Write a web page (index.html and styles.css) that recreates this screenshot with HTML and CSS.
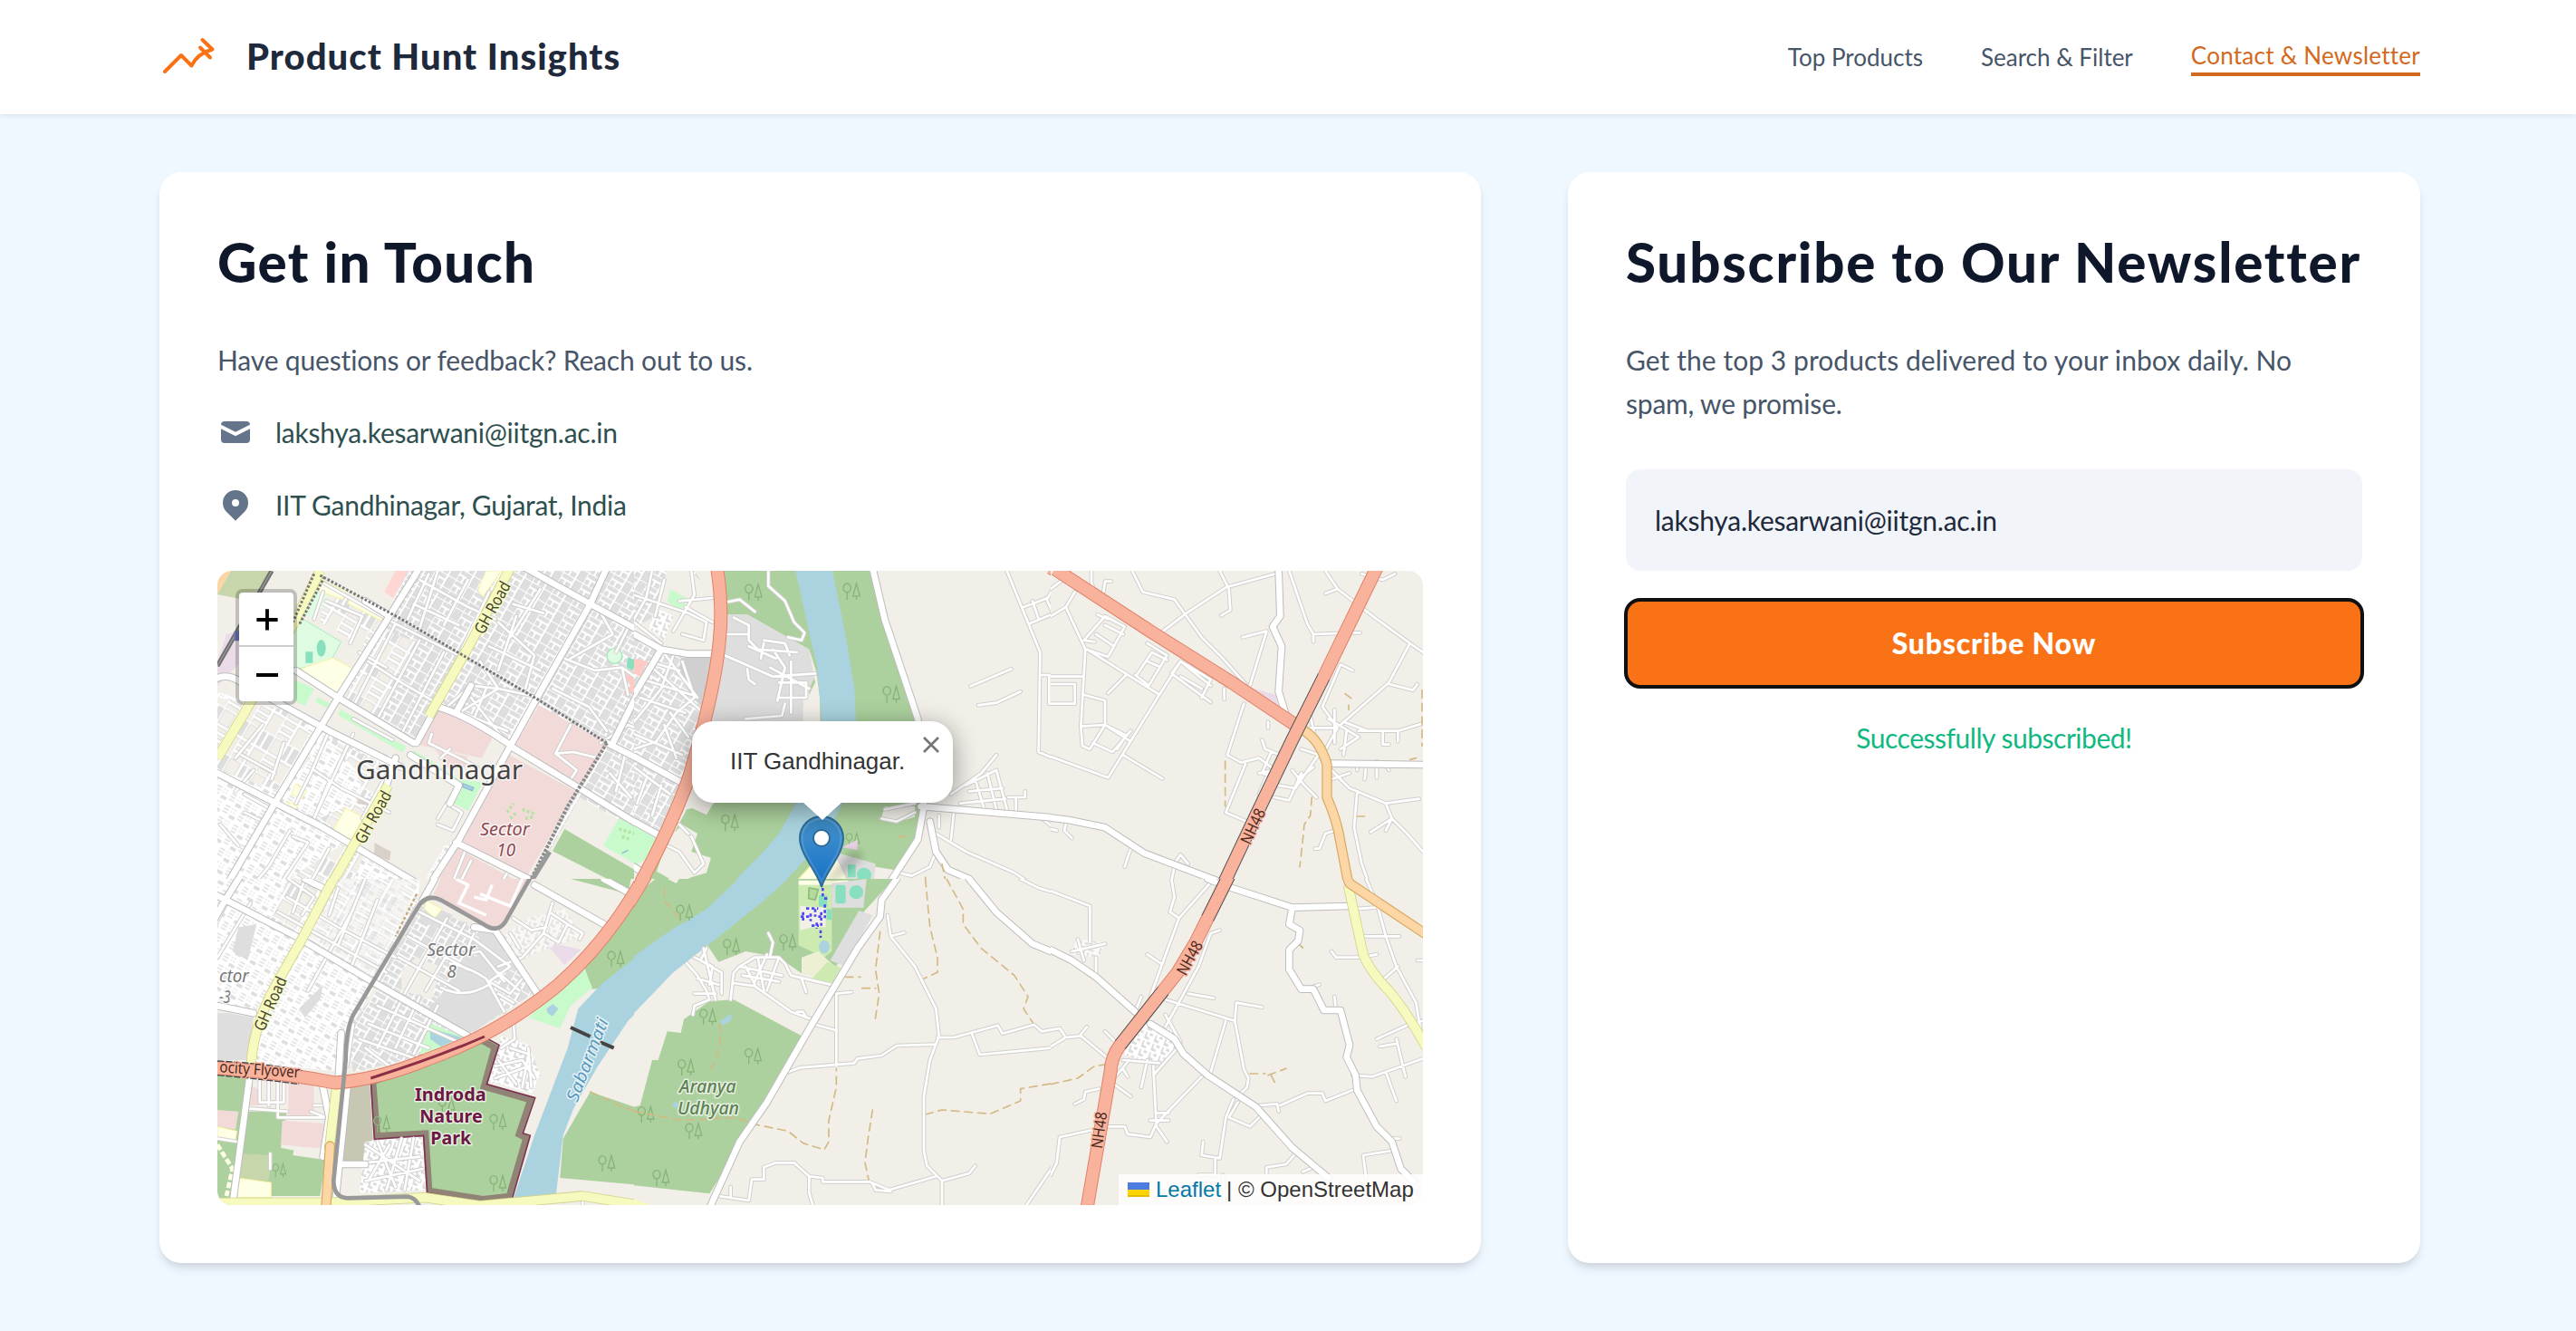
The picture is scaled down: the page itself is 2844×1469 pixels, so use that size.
FILE: index.html
```html
<!DOCTYPE html>
<html lang="en">
<head>
<meta charset="utf-8">
<title>Product Hunt Insights</title>
<link rel="stylesheet" href="styles.css">
</head>
<body>
<header class="header">
  <div class="brand">
    <svg class="logo" viewBox="0 0 64 64"><path d="M6 48 24 30 35.500 41.500Q42 28 58.500 23.500L47.500 13M45 21.500 56 32.500"/></svg>
    <span class="brand-name">Product Hunt Insights</span>
  </div>
  <nav class="nav">
    <a class="nav-products">Top Products</a>
    <a class="nav-search">Search &amp; Filter</a>
    <a class="active">Contact &amp; Newsletter</a>
  </nav>
</header>
<main class="main">
  <section class="card">
    <h1 class="title-touch">Get in Touch</h1>
    <p class="intro">Have questions or feedback? Reach out to us.</p>
    <div class="contact">
      <svg class="icon" viewBox="0 0 20 20"><path d="M2.003 5.884 10 9.882l7.997-3.998A2 2 0 0 0 16 4H4a2 2 0 0 0-1.997 1.884z"/><path d="m18 8.118-8 4-8-4V14a2 2 0 0 0 2 2h12a2 2 0 0 0 2-2V8.118z"/></svg>
      <span class="mail">lakshya.kesarwani@iitgn.ac.in</span>
    </div>
    <div class="contact">
      <svg class="icon" viewBox="0 0 20 20"><path fill-rule="evenodd" d="M5.050 4.050a7 7 0 1 1 9.900 9.900L10 18.900l-4.950-4.950a7 7 0 0 1 0-9.900zM10 11a2 2 0 1 0 0-4 2 2 0 0 0 0 4z"/></svg>
      <span class="place">IIT Gandhinagar, Gujarat, India</span>
    </div>
    <div class="map">
      <svg class="tiles" viewBox="240 630 1331 700">
        <defs>
          <pattern id="blocks" width="74" height="40" patternUnits="userSpaceOnUse" patternTransform="rotate(30)"><rect width="74" height="40" fill="#dedede"/><path d="M0 0H74M0 20H44M0 0V40M44 0V40M20 20V40" stroke="#c4c4c4" stroke-width="11" fill="none"/><path d="M0 0H74M0 20H44M0 0V40M44 0V40M20 20V40" stroke="#fff" stroke-width="8" fill="none"/></pattern>
          <pattern id="plots" width="96" height="130" patternUnits="userSpaceOnUse" patternTransform="rotate(30)"><rect width="96" height="130" fill="#f2efe9"/><path d="M50 0H96V60H50z" fill="#dedede"/><path d="M0 0H96M0 60H96M0 0V130M50 0V130M72 0V60M0 85H50M0 108H50" stroke="#cfcfcf" stroke-width="13" fill="none"/><path d="M0 0H96M0 60H96M0 0V130M50 0V130M72 0V60M0 85H50M0 108H50" stroke="#fff" stroke-width="9" fill="none"/></pattern>
          <pattern id="dense" width="56" height="44" patternUnits="userSpaceOnUse" patternTransform="rotate(30)"><rect width="56" height="44" fill="#fff"/><path d="M4 8H22M4 19H22M4 30H22M30 8H34M40 8H44M30 19H34M40 19H44M34 31H50V38H34z" stroke="#dcdcdc" stroke-width="4" fill="#e6e2dc"/></pattern>
          <pattern id="village" width="34" height="30" patternUnits="userSpaceOnUse" patternTransform="rotate(20)"><rect width="34" height="30" fill="#dadada"/><path d="M0 2H34M0 16L16 20V30M4 0V16M24 0V30" stroke="#fff" stroke-width="9" fill="none"/></pattern>
          <symbol id="trees" viewBox="0 0 60 60"><path d="M15 57V33M15 33A12 14 0 1 1 15.100 33M45 57V45M34 45 45 4 56 45z" fill="none" stroke="#88b47a" stroke-width="4"/></symbol>

          <path id="a1-minor" d="M380 70 620 205 830 310M500 300 590 350M530 330 640 400 760 470M380 100 350 190M390 130 510 180 470 270M620 205 480 480M700 260 560 520M780 300 640 570M860 60 780 210M930 100 840 290M700 60 860 150 950 190M680 140 830 210M660 190 730 40M760 30 700 220M960 200 1080 310 1050 420M900 330 960 420 830 500M930 280 1100 360M1020 180 960 360M1100 90 1000 250M1110 170 1010 140M1170 310 1120 400M780 490 870 410 960 420 1100 450M840 500 990 560M870 450 980 590M920 420 880 520M1180 320 1280 360 1370 350 1440 400M1200 320 1340 240 1300 170M1370 350 1390 440M1320 560 1260 480 1140 420M1350 300 1400 200 1440 230M1300 600 1390 540 1440 560M1330 700 1400 780M1380 640 1350 760M120 770 210 820M150 690 90 760M110 640 220 700M180 540 90 650M250 600 210 720M330 520 410 560M400 560 340 700 290 800M480 570 350 850M350 690 440 750 600 830M350 850 400 730M620 650 510 850M740 570 730 600 890 680M800 620 770 650M1200 540 1150 635 1220 690 1200 720M1150 635 1210 630 1290 650M850 960 810 1060M870 990 830 1070M960 1080 990 1030M760 850 790 800 840 830 810 890 760 870M40 870 100 940M120 830 180 860 150 930M270 890 200 1010 140 1080M280 910 330 930 250 1050M400 950 340 1060M500 490 660 580M480 520 610 590"/>
          <path id="a1-main" d="M30 385Q70 370 110 400L400 560 640 680M290 360 430 450 680 600M700 20 600 180 430 450 220 800 50 1090M1050 20 1265 140 1440 235M1320 20 1265 140 1100 430 1000 610 830 920 720 1090M1000 610 1230 750 1440 880M30 700 380 880 700 1070M820 930 1060 1050M1440 400 1340 600M1320 600 1440 660M690 600 750 490M760 480Q860 510 990 600M620 650 590 740M670 640 830 740 800 800M600 180 520 130M820 500 870 410"/>
          <path id="b1-minor" d="M445 30V80L500 130 530 200 565 235 555 260 510 250M300 135 350 125 400 165M330 185 380 210V260L410 290 540 300M300 240 380 240M300 310 460 380 600 370M375 355 380 390 400 405M430 260 500 270 515 310M460 290 500 350 475 460M450 350 580 420M480 400H570V450H480M520 330V500M370 520 490 510 500 470M430 270 420 320M380 280 470 320M1235 30 1345 300 1340 630 1440 672M1345 375H1440M1375 380V470H1440M1440 405H1385M1290 150 1370 120 1400 70 1440 30M1310 205 1440 150M1320 130 1340 190M1365 120 1385 165M1115 412 1250 355M1140 475 1200 467 1280 430M1050 770 1150 700 1200 640M1100 740 1200 690 1235 820M1130 720 1160 820M1170 700 1200 820M1110 760 1220 750M1080 800 1230 785M1240 780H1295V760M1265 780V830M1010 840V880M1060 820 1050 920M830 820 930 800M820 850 870 860 930 830M1340 840 1400 890M1000 900 1100 960 1260 1030 1320 1070 1440 1110M1000 960 980 1010 920 1040 880 1030M110 940 150 960 200 1030 230 1000 190 910M180 900 150 870M0 200 90 270M60 30 40 120 0 190M100 60 70 180M190 30 200 110 130 230M0 110 180 170 240 200 230 260 160 240M150 130 260 120M170 150 260 200M90 290 210 450M130 310 90 420 0 530M160 330 200 450 140 500 70 600 0 570M30 390 190 440M60 350 230 500M20 450 170 500M120 500 180 580M70 600 160 640M100 540 140 650M0 680 120 770M40 720 10 800M90 740 60 840M50 330 150 360M0 620 60 600"/>
          <path id="b1-main" d="M790 20 830 190 940 520 960 810 940 920 810 1120M950 810 1440 852M980 860 1000 960 1040 1020 1110 1050 1180 1130M0 240 90 290 180 305 265 305M90 290 0 440M0 645 165 735M0 860 100 915M0 1010 30 1030"/>
          <path id="c1-minor" d="M135 20V70L150 105M270 30 305 100 410 125 500 250 570 320 650 410M365 235 450 170 580 85 745 40M560 30 590 90 595 160 565 178M175 100 180 65H200M80 100 50 150 115 290 100 545 105 610 130 620 180 540 265 595M0 180 50 150M0 90 40 60M120 290 360 440 430 330 530 410M145 265 110 260 180 180 245 215 190 315 120 290M180 210 240 240M150 240 210 280M155 175 190 190M285 375 335 300 385 325M320 270 385 310 325 410 280 375M320 330 355 345M400 370 530 465M400 370 430 330 530 390 500 450M430 380 500 420M575 420V455M250 375 190 435M0 380H110M0 405H80V470H0M110 440 180 460V540L100 545M140 600 205 630 265 560M180 540 250 575 220 620M360 440 190 715 0 645M240 640 370 718M715 230 660 410M715 230 635 250M790 30 850 205 870 240 1000 235H1025M870 240V265M640 470 585 640 630 665 690 650 730 680M645 670 580 830 660 865M720 530V550M700 590 710 620 760 640M730 630 700 700 750 720M690 700 740 690M690 770 720 700M740 780 790 790 830 700M750 740 810 750 900 620M800 690 840 740 880 780M830 620 890 640M820 720 870 680M910 30 950 90 1080 190 1190 270 1120 400 960 540M910 105 950 90M1190 270 1233 300M1120 405 1200 425 1215 405M960 340 900 480 950 550 900 640M960 340 1000 360M920 520 1020 580 960 620M940 490V600M980 560 970 640M860 550H950M1020 560 1150 560 1233 535M1100 560V605H1120M1150 565V595M1015 670V690M1045 670 1040 720M1080 660V715M1110 670 1120 690M930 690 990 750 1110 800 1130 850 1180 900 1233 960M1110 800 1220 785M1060 895 1130 850 1110 890M1015 760 1005 880 1030 1000 1070 1110M940 890 910 900 890 950H875M1030 40 1100 60 1140 40M0 885 20 890M265 950 245 1010M50 870 45 890 70 915M410 1000 430 970 455 1000M410 1010 395 1080 415 1110M540 1060 500 1110M880 600 860 510M970 530 1050 560M930 720 990 700M0 1090 30 1110"/>
          <path id="c1-main" d="M755 30 760 180 735 215 765 280 755 430 780 510 840 560M930 668 1240 672M0 848 60 855 180 880 310 965 600 1075 720 1115"/>
          <path id="a2-minor" d="M690 90 560 340M790 130 650 380M850 150 720 370M700 110 880 200 1000 290M660 190 860 300M630 260 830 370M880 180 850 250 900 240 980 340M800 280Q860 290 920 330L980 440M770 360Q850 400 930 350M1000 290 930 340 1000 380 1040 330M960 310 1030 370M960 380 1010 410M1140 80 1110 180 1040 260 960 290M1010 130 1070 170 1120 160M1130 110 1190 150 1160 210 1110 180M1190 150 1240 180 1230 200M1000 180 1030 230M640 400 560 560M700 390 620 560M760 420 680 580M560 420 850 550M530 480 730 560M500 530 700 600M480 480 460 620M520 560 600 620M170 670V740H250V670M200 660V750M230 670V790H390M340 770 390 790M350 750H400M130 760 260 770M265 0 350 60M320 0 280 110M350 60 310 120M430 30 400 120M520 0 430 220M60 80 20 160M140 80 30 260M480 100 330 370M560 70 470 300M260 60 430 160 620 260M230 110 590 310M950 620 1040 600 1080 660M1000 560 1060 580 1040 690M950 660 1060 620M960 600 1020 680M1010 470 1015 530 970 560M1060 560 1070 690M600 880 530 1000M640 860 590 1030M520 880 700 1000M520 940 700 920M560 870 620 1020M520 1000 710 960M680 860 650 1030M30 860 95 870M205 910V960M1240 1060V1080"/>
          <path id="a2-main" d="M0 40 290 190 560 350 860 520M100 0 50 80 0 170M750 0 710 70M1080 20 1310 150M950 170 1090 380M880 160 950 170M30 420 150 445M140 630 80 1080M1310 0 1400 50M440 510 430 680M460 690 420 1080M320 0 400 40M380 690 400 790 380 920M430 945H520"/>
          <path id="b2-minor" d="M175 280 210 320 240 370 250 400M240 230 220 270 290 310M200 260 260 290 250 350M330 310 350 290 400 260H480L500 280 520 320M445 180 460 210 450 260M330 310 320 400M330 345 400 355 520 440 590 465M520 320 650 350M555 330 570 375M670 380V620M670 380 720 375M590 480 665 500M540 440 560 440 570 460M510 640 550 625 730 610 740 595 820 585 870 552 1000 548M840 120 850 190 930 290 1000 430 1010 520 980 600 960 720V900L970 950 1020 1000V1090M850 190 895 178M1005 525 1060 525 1205 485 1220 512 1325 483 1350 505 1410 495 1430 525 1380 560 1145 582 1120 515M1440 520 1430 525M1280 0 1340 30 1440 60M280 1050 380 1065 390 995H430V955L470 940H530L580 985 625 990V1003H780L845 1030 1000 985M580 985V1040L595 1090M320 1020V1050M790 1010 800 1030 850 1035M1020 1000 1110 975 1130 950M1440 855H1410L1395 940 1300 1080M195 450 200 420 250 400M370 290 400 350M410 260 430 370M440 250 400 340M480 260 440 370M350 290 490 320M360 320 480 340M230 230 270 400M290 310V380M200 380H270M210 330 280 350"/>
          <path id="b2-main" d="M870 0 820 70 815 125 740 230 590 480 440 740 350 870 250 1090M1110 0 1200 110 1320 215 1440 265"/>
          <path id="c2-minor" d="M400 0 410 60 395 110 425 130 540 0M425 130 370 280 330 390M320 250 365 280M560 170 530 180 490 290 380 490M455 380 540 395M380 400 610 470 615 410 700 425M580 470 530 640M610 470 640 630 655 660 650 690 620 720M0 555 50 525 100 520 185 590M0 500 30 495 50 525M120 490 95 520M180 505 215 540M160 695 115 705 110 730 80 745M210 680 265 720M30 855 190 820 245 820 255 845 330 855 350 810 500 655M30 855 20 940 0 980M340 620 350 820 385 870M330 800H390M350 775H390M300 690 320 600M210 660 260 600M240 630 255 655M690 750 750 745 755 770M760 750 850 710H900L910 735 1000 700M605 730 580 790 560 925 500 915 505 870M620 740 590 790 660 820 690 790M545 925V980H490M570 980 575 1070M810 910 780 945 715 955V975M870 955 835 970M945 435 940 390M890 350 860 360M1000 650 1065 655 1233 595M1110 640 1145 735M1145 530 1175 655M1090 555 1150 545M1080 530 1180 485 1233 470M1045 0 1080 80 1110 190 1145 290 1210 410 1225 500M1040 190H1155M930 240 945 260H1030L1080 250M1105 330 1150 290M1130 900 1035 915 1045 990M1155 860H1125M1000 100 1075 95M130 210 130 90 0 40M1215 270H1233M150 260 150 320M70 240 180 215M90 200 110 270M240 600 360 610M300 390 280 440M340 650 420 560M380 450 430 540"/>
          <path id="c2-main" d="M0 235 70 270 150 325 280 440M600 30 800 95 990 90M800 95 790 150 825 170 820 205 790 235 790 300 830 365 870 365 905 435H960L990 550 980 590 1010 650 1015 700 1080 820 1130 870 1160 960 1200 1000M330 480 410 530 440 580 520 650 680 755 800 890 920 990M520 0 545 10"/>
        </defs>

        <svg x="230" y="620" width="472" height="352" viewBox="0 0 1416 1056">
          <rect width="1440" height="1080" fill="#f2efe9"/>
          <path d="M30 430 400 560 620 650 480 940 830 940 720 1080H0z" fill="url(#dense)"/>
          <path d="M30 450 320 500 340 650 240 760 30 690z" fill="url(#plots)"/>
          <path d="M640 30H1440V1080H1050L1220 750 1000 610 820 500 700 590 430 440 600 180z" fill="url(#blocks)"/>
          <path d="M540 210 700 270 560 520 440 450z" fill="url(#plots)"/>
          <path d="M950 200 1180 320 1100 460 990 580 830 510 860 290z" fill="url(#blocks)"/>
          <path d="M390 60 590 180 480 260 370 200z" fill="url(#plots)"/>
          <path d="M1230 780 1440 900V1080H1060z" fill="#f2efe9"/>
          <path d="M370 570 600 680 560 760 370 850 480 930 420 950 220 1080H470L520 960 500 700z" fill="url(#plots)"/>
          <path d="M640 730H730L800 770 760 850 810 895 710 1065 490 935 560 830z" fill="#f2efe9"/>
          <path d="M30 30H75L30 108z" fill="#fcd6a4"/><path d="M75 30H205L140 130 90 120 30 108z" fill="#c8d7ab"/>
          <path d="M60 240 100 230V340L30 410V330z" fill="#ebdbe8"/>
          <path d="M360 95 395 115 350 190 310 170z" fill="#dffce2"/><path d="M280 170 440 265 400 340 280 356z" fill="#dffce2" stroke="#a9eebc" stroke-width="3"/>
          <ellipse cx="374" cy="286" rx="15" ry="28" fill="#88e0be"/><path d="M322 298H346V335H322z" fill="#88e0be"/>
          <path d="M375 60 455 98 445 125 360 95zM470 118 582 180 572 195 462 138zM305 355 412 318 480 355 428 447zM920 30H970L910 115 893 95zM455 815 520 850 475 930 412 890zM290 735 325 760 310 785 275 770zM260 795 300 805 285 822z" fill="#ffffe5" stroke="#f6f2a0" stroke-width="3"/>
          <path d="M620 30H662L612 120 583 100z" fill="#ffd6d1"/>
          <path d="M360 447 413 475 408 492 355 465zM437 488 655 612 645 632 430 508zM285 390 350 420 320 477 285 460zM680 625 740 660 830 720 910 730 860 825 808 797 828 742 676 645zM925 745 1008 785 968 857 900 820zM1360 850 1440 885V1005H1420L1308 940z" fill="#c8facc"/>
          <circle cx="1345" cy="312" r="25" fill="#dffce2" stroke="#9fe7b5" stroke-width="4"/><path d="M1390 315 1420 330 1405 360 1385 350z" fill="#88e0be"/><path d="M1380 380 1440 350V380L1390 450 1375 430 1400 410z" fill="#ffc9c4"/>
          <path d="M755 490 860 530 945 575 905 650 690 605zM1095 475 1322 602 1235 738 1015 610zM990 635 1217 760 1050 1050 833 920zM825 948 1020 1055V1080H745zM750 620 860 645 850 680 800 690z" fill="#f2dad9"/>
          <path d="M1180 885 1430 1030 1400 1080H1380L1140 958z" fill="#add19e"/>
          <path d="M550 930 605 960 600 990 550 970zM500 780 550 790 540 810 495 800z" fill="#d9d0c9"/>
          <path d="M845 735 878 748 874 758 842 745zM1370 965 1390 955" fill="#aad3df" stroke="#8bb8d8" stroke-width="4"/>
          <path d="M990 830 1010 800M1000 850 1020 830M1040 820 1080 835M1050 850 1075 845M1360 885 1430 905M1370 910 1400 920" stroke="#b5e3a0" stroke-width="10" stroke-dasharray="9 7"/>
          <use href="#a1-minor" class="minor-case"/><use href="#a1-minor" class="minor"/>
          <path d="M210 30 30 345" stroke="#707070" stroke-width="15"/><path d="M210 30 30 345" stroke="#aaa" stroke-width="3"/><path d="M85 230H105V262H85z" fill="#6f74b0"/>
          <use href="#a1-main" class="main-case"/><use href="#a1-main" class="main-road"/>
          <path d="M370 30 280 210 120 500 30 650M1000 20 860 285 730 512M595 740 395 1090" class="yellow-case"/><path d="M370 30 280 210 120 500 30 650M1000 20 860 285 730 512M595 740 395 1090" class="yellow"/>
          <path d="M350 40 280 200M385 50 300 210M370 45 640 190 1090 455 1320 600" fill="none" stroke="#777" stroke-width="9" stroke-dasharray="8 6"/><path d="M1320 600 1190 810 1050 1090" fill="none" stroke="#8a8a8a" stroke-width="12" stroke-dasharray="9 5"/><path d="M1130 960 1050 1090" stroke="#999" stroke-width="16"/>
          <path d="M1380 1120 1440 1020V1120z" fill="#f9b29c"/>
          <g class="label"><text class="city" x="489" y="720" textLength="552" lengthAdjust="spacingAndGlyphs">Gandhinagar</text><text class="sector-red" x="900" y="906" textLength="164" lengthAdjust="spacingAndGlyphs">Sector</text><text class="sector-red" x="955" y="976" textLength="62" lengthAdjust="spacingAndGlyphs">10</text><text class="road-name" transform="translate(911 244) rotate(-61)" textLength="190" lengthAdjust="spacingAndGlyphs">GH Road</text><text class="road-name" transform="translate(516 938) rotate(-61)" textLength="190" lengthAdjust="spacingAndGlyphs">GH Road</text></g>
        </svg>

        <svg x="700" y="620" width="462" height="352" viewBox="0 0 1386 1056">
          <rect width="1440" height="1080" fill="#f2efe9"/>
          <path d="M0 30H200L260 120 255 430 180 720 95 910 0 860z" fill="url(#blocks)"/>
          <path d="M60 30 190 30 260 110V300L90 290 0 240V190z" fill="#f2efe9"/><path d="M0 30H110L70 180 0 220z" fill="url(#blocks)"/><path d="M70 150 130 180 100 260 50 220z" fill="url(#village)"/>
          <path d="M120 90 182 125 150 162 110 130z" fill="#c8facc"/><path d="M0 320 45 330 20 380 0 370z" fill="#ffc9c4"/>
          <path d="M300 30H790L940 527 960 800 925 960 860 1020 800 1010 760 1110H0V1060L110 940 175 820 270 798 540 680 580 520 580 290 375 175H305z" fill="#add19e"/>
          <path d="M305 175H375L580 290 605 370 560 460 570 530H230L280 310z" fill="#dedede"/><path d="M580 290 605 370 615 450 620 680H560V480L600 400z" fill="#f2efe9"/>
          <path d="M155 318H265L240 490 190 450 150 350z" fill="#d0d0d0"/>
          <path d="M0 872 75 910 40 985 0 1005z" fill="#c8facc"/><path d="M190 780H275L240 838 180 810zM110 920 160 870 210 900 190 960 255 980 240 1030 190 1045 145 1065 75 1025zM830 810H930V845L860 865 820 845z" fill="#f2efe9"/>
          <path d="M535 30H657L700 240 730 420 740 640 690 800 630 920 440 1120H270L420 970 480 900 535 800 620 650 620 500 605 340 570 190z" fill="#aad3df"/>
          <use href="#trees" x="365" y="70" width="62" height="62"/><use href="#trees" x="690" y="67" width="62" height="62"/><use href="#trees" x="822" y="408" width="62" height="62"/><use href="#trees" x="287" y="833" width="62" height="62"/><use href="#trees" x="700" y="890" width="50" height="60"/>
          <path d="M545 1075V1050L600 990 690 980 705 1060 640 1080z" fill="#ffffe5" stroke="#f3ee9a" stroke-width="4"/><path d="M660 960 800 1000 790 1110H650L710 1065z" fill="#dedede"/><path d="M545 1080H655V1110H545z" fill="#cdebb0"/>
          <path d="M708 1003H734V1045H708zM668 1075H702V1110H668z" fill="#88e0be"/><circle cx="762" cy="1037" r="24" fill="#88e0be"/><circle cx="735" cy="1094" r="23" fill="#88e0be"/><path d="M720 930 740 920V955L690 945" fill="#e7cfe2"/>
          <use href="#b1-minor" class="minor-case"/><use href="#b1-minor" class="minor"/><use href="#b1-main" class="main-case"/><use href="#b1-main" class="main-road"/>
          <path d="M875 910H910M965 1045 970 1110M1020 1000 1030 1050 1070 1110M100 1060V1110" class="path"/>
          <path d="M275 20Q295 150 283 260 270 420 180 720 110 910-10 1120" class="trunk-case"/><path d="M275 20Q295 150 283 260 270 420 180 720 110 910-10 1120" class="trunk"/>
          <path d="M1380 20 1450 62" class="trunk-case"/><path d="M1380 20 1450 62" class="trunk"/>
        </svg>

        <svg x="1160" y="620" width="422" height="352" viewBox="0 0 1266 1056">
          <rect width="1270" height="1080" fill="#f2efe9"/><path d="M655 415 745 440 755 495 650 435z" fill="#ebdbe8"/>
          <use href="#c1-minor" class="minor-case"/><use href="#c1-minor" class="minor"/><use href="#c1-main" class="main-case"/><use href="#c1-main" class="main-road"/>
          <path d="M578 660V810M975 437 995 452M987 475V490M865 780 860 840 840 870 835 920 825 1010M1015 843H1040M1190 655 1210 650M1230 425V610" class="path"/>
          <path d="M840 560Q890 590 915 670L915 780Q950 860 960 930L985 1060 1060 1110" class="orange-case"/><path d="M840 560Q890 590 915 670L915 780Q950 860 960 930L985 1060 1060 1110" class="orange"/>
          <path d="M15 25 330 230 600 400 810 540" class="trunk-case"/><path d="M15 25 330 230 600 400 810 540" class="trunk"/>
          <path d="M1080 20 905 380" class="trunk-case"/><path d="M905 380 800 590 680 840 545 1125" class="bridge-case"/><path d="M1080 20 905 380 800 590 680 840 545 1125" class="trunk"/>
          <g class="label"><text class="trunk-name" transform="translate(660 940) rotate(-65)" textLength="124" lengthAdjust="spacingAndGlyphs">NH48</text></g>
        </svg>

        <svg x="230" y="970" width="472" height="370" viewBox="0 0 1416 1110">
          <rect width="1440" height="1110" fill="#f2efe9"/>
          <path d="M0 0H700L690 110 560 340 460 510 450 640 150 610 150 445 30 420z" fill="url(#dense)"/>
          <path d="M265 0H380L290 190 200 140z" fill="url(#plots)"/><path d="M420 0H700L560 340 310 200z" fill="url(#plots)" opacity=".6"/>
          <path d="M710 80 900 170 1090 370 980 440 860 520 560 350z" fill="url(#blocks)"/><path d="M560 370 720 450 840 530 690 590 480 640 460 500z" fill="url(#blocks)"/>
          <path d="M720 80 810 120 780 170 700 140zM900 170 950 180 1010 290 930 330 790 360 720 440 860 510 970 440 940 350 890 260z" fill="#dedede"/><path d="M850 250Q930 250 930 350L980 440 860 515 725 440 780 370Z" fill="#dedede"/>
          <path d="M690 260 770 290 740 400 640 370 640 300z" fill="#f2efe9"/><path d="M30 445H70L150 460 130 600H30zM100 160 160 150 130 270 80 240zM300 430 380 350 370 400 320 460z" fill="#dedede"/>
          <path d="M720 70 775 100 750 130 715 100z" fill="#ffffe5" stroke="#f3ee9a" stroke-width="3"/>
          <path d="M770 0H1060L980 150 940 165 745 50z" fill="#f2dad9"/><path d="M820 0 860 20 830 80 920 120M900 50 1000 90 1040 0M880 60 920 70 940 20" fill="none" stroke="#fff" stroke-width="10"/>
          <path d="M1060 50 1130 80 1090 150 1030 110z" fill="#f2efe9"/><path d="M1110 205 1235 235 1180 285z" fill="#ebdbe8"/><path d="M1060 130 1180 100 1240 190 1100 240 1000 280 960 200z" fill="url(#village)" opacity=".55"/>
          <path d="M1200 0H1400L1390 50z" fill="#add19e"/><path d="M1245 290 1440 50V350L1270 365z" fill="#add19e"/><path d="M1240 285 1272 360 1200 420 1165 495 1060 460z" fill="#c8facc"/>
          <path d="M1120 430 1140 415 1160 430 1140 455 1125 445z" fill="#aad3df"/>
          <path d="M740 480 850 525 790 560 700 580 720 520z" fill="#c8facc"/><path d="M735 495 840 525 770 555 735 530z" fill="#aad3df"/>
          <path d="M1440 240 1300 350 1225 430 1190 560 1080 850 1010 1060H1150L1175 850 1210 760 1290 620 1390 470 1440 420z" fill="#aad3df"/>
          <path d="M1265 705 1440 765V1015L1165 990 1175 860z" fill="#add19e"/>
          <path d="M30 650H140L90 1060H30zM130 770 260 770 240 890 390 920 370 1050H100z" fill="#add19e"/><path d="M30 765 100 770 90 830 30 820zM265 670H350V780L265 790zM135 680 170 700V750H135zM245 800 385 810 380 895 240 880z" fill="#f2dad9"/>
          <path d="M285 890H385V930L280 915z" fill="#f2efe9"/><path d="M110 910 210 915 200 1000 100 990z" fill="#c8d7ab"/><path d="M30 820 95 835 90 865 30 860zM100 990 208 1005V1055H95z" fill="#ffffe5" stroke="#f3ee9a" stroke-width="3"/>
          <path d="M470 690 535 680 545 860 510 940H430z" fill="#c7c7b4"/><path d="M30 880 80 960 60 1050" fill="none" stroke="#ffffe5" stroke-width="14" stroke-dasharray="20 8"/>
          <path d="M520 870 705 850 720 1030 500 1040z" fill="url(#village)"/><path d="M970 520 1060 550 1100 650 1070 710 930 670 960 560z" fill="url(#village)"/>
          <path d="M538 665 910 525 960 550 920 680 1080 725 1040 840 1065 850 1005 1060 910 1070 725 1040 713 850 550 862z" fill="#add19e"/><path d="M546 672 905 535 948 558 912 688 1066 732 1028 846 1052 858 996 1050 910 1060 732 1032 720 842 560 850z" fill="none" stroke="#8f7a72" stroke-width="20" opacity=".9"/><path d="M538 665 910 522 963 550 922 680 1082 725 1042 842 1066 850 1006 1060 910 1071 725 1040 713 850 550 862z" fill="none" stroke="#7d3351" stroke-width="5"/>
          <use href="#trees" x="1320" y="235" width="60" height="60"/><use href="#trees" x="545" y="782" width="60" height="60"/><use href="#trees" x="930" y="775" width="60" height="60"/><use href="#trees" x="930" y="978" width="60" height="60"/><use href="#trees" x="1290" y="912" width="60" height="60"/><use href="#trees" x="210" y="935" width="50" height="60"/><use href="#trees" x="760" y="720" width="60" height="60"/>
          <use href="#a2-minor" class="minor-case"/><use href="#a2-minor" class="minor"/><use href="#a2-main" class="main-case"/><use href="#a2-main" class="main-road"/>
          <path d="M420-10 310 200 230 340Q150 480 142 610" class="yellow-case"/><path d="M420-10 310 200 230 340Q150 480 142 610" class="yellow"/><path d="M425 690 400 900M30 1072H400L720 1055 900 1082 1240 1050 1440 1082" class="yellow-case"/><path d="M425 690 400 900M30 1072H400L720 1055 900 1082 1240 1050 1440 1082" class="yellow"/>
          <path d="M403 885 390 1085" class="orange-case"/><path d="M403 885 390 1085" class="orange"/>
          <path d="M20 626Q240 640 420 675 560 665 720 600 960 515 1160 350 1330 200 1450-20" class="trunk-case"/><path d="M20 626Q240 640 420 675 560 665 720 600 960 515 1160 350 1330 200 1450-20" class="trunk"/><path d="M30 603Q200 612 310 635M30 650Q200 665 300 680" fill="none" stroke="#444" stroke-width="4" stroke-dasharray="22 5"/>
          <path d="M538 660Q760 590 915 522" fill="none" stroke="#8a2f45" stroke-width="9"/>
          <path d="M1070-10 985 140Q960 180 920 155L770 70Q720 45 690 100L480 450Q455 500 455 600L415 1000Q415 1055 460 1057L660 1052Q685 1055 700 1085" fill="none" stroke="#999" stroke-width="14"/><path d="M690 50 620 190" stroke="#c9a87c" stroke-width="7" stroke-dasharray="10 7"/>
          <path d="M1200 492 1265 522M1297 540 1343 560" stroke="#444" stroke-width="12"/><path d="M1265 705 1350 745 1440 780" class="path"/>
          <g class="label"><text class="sector" x="724" y="256" textLength="160" lengthAdjust="spacingAndGlyphs">Sector</text><text class="sector" x="790" y="328">8</text><text class="sector" x="36" y="341" textLength="98" lengthAdjust="spacingAndGlyphs">ctor</text><text class="sector" x="36" y="412" textLength="38" lengthAdjust="spacingAndGlyphs">-3</text><text class="park" x="684" y="734" textLength="236" lengthAdjust="spacingAndGlyphs">Indroda</text><text class="park" x="700" y="806" textLength="208" lengthAdjust="spacingAndGlyphs">Nature</text><text class="park" x="736" y="878" textLength="135" lengthAdjust="spacingAndGlyphs">Park</text><text class="river" transform="translate(1222 742) rotate(-69)" textLength="290" lengthAdjust="spacingAndGlyphs">Sabarmati</text><text class="road-name" transform="translate(184 508) rotate(-66)" textLength="190" lengthAdjust="spacingAndGlyphs">GH Road</text><text class="trunk-name" transform="translate(36 640) rotate(4)" textLength="266" lengthAdjust="spacingAndGlyphs">ocity Flyover</text></g>
        </svg>

        <svg x="700" y="970" width="462" height="370" viewBox="0 0 1386 1110">
          <rect width="1440" height="1110" fill="#f2efe9"/>
          <path d="M70 0H860L760 110 650 330 550 310 480 260 370 240 280 275 240 215 0 260V60z" fill="#add19e"/><path d="M110 0H150L140 15z" fill="#f2efe9"/>
          <path d="M345 0H510L420 80 250 215 130 310 0 445V255L130 165 240 100z" fill="#aad3df"/>
          <path d="M165 465 200 440 250 405 330 400 555 520 440 740 250 1042 0 1015V755L20 750 60 600H80L110 505 155 510z" fill="#add19e"/><path d="M285 470 325 445 320 470 290 485z" fill="#aad3df"/><circle cx="137" cy="748" r="9" fill="#aad3df"/>
          <path d="M545 20H655V240L630 260 545 220z" fill="#cdebb0"/><path d="M545 5H710V20H545z" fill="#ffffe5"/><path d="M550 90 635 95V160H590L550 170z" fill="#f2efe9"/><path d="M655 15 770 0 760 95H655z" fill="#dedede"/><path d="M745 105 790 120 700 290 650 270z" fill="#dedede"/>
          <path d="M555 260 610 240 670 295 650 345 555 310z" fill="#eef0d5"/><path d="M640 275 685 295 660 345 590 330z" fill="#cdebb0"/><path d="M0 1060 80 1090H0z" fill="#f7fabf"/>
          <rect x="667" y="20" width="34" height="62" rx="9" fill="#88e0be"/><circle cx="736" cy="44" r="23" fill="#88e0be"/><path d="M612 55H640V92H612zM638 100H654V136H638z" fill="#88e0be"/><ellipse cx="630" cy="225" rx="18" ry="22" fill="#aad3df"/><path d="M580 30 610 35 600 70 578 65z" fill="#b6d99c" stroke="#8db97c" stroke-width="5"/>
          <path d="M552 125H580M560 110V140M570 98H610M585 115V140M600 100V125M610 125H630M588 155H612M605 145V165M620 110V155M618 170V195M625 30V60M630 65H642M632 85V130" stroke="#4c49f0" stroke-width="8" stroke-dasharray="10 8"/>
          <use href="#trees" x="138" y="82" width="60" height="60"/><use href="#trees" x="293" y="195" width="60" height="60"/><use href="#trees" x="480" y="180" width="60" height="60"/><use href="#trees" x="215" y="427" width="60" height="60"/><use href="#trees" x="365" y="557" width="60" height="60"/><use href="#trees" x="143" y="594" width="60" height="60"/><use href="#trees" x="10" y="750" width="60" height="60"/><use href="#trees" x="168" y="805" width="60" height="60"/><use href="#trees" x="60" y="960" width="60" height="60"/>
          <path d="M100 30V70L150 130M285 480V550L265 610 245 645M0 770 160 800 330 790 410 815 510 835 560 875 630 897 645 870V800L670 690V630M815 175 800 300 812 380 798 470M700 325H750M755 362H800M965 0 980 160 1005 260V310L960 330M1035 0 1090 100 1090 150 1150 230 1260 320 1305 390 1290 430 1320 475M790 765 775 860 765 940 778 1000M965 780 1020 765 1180 778 1280 735V695L1440 668" class="path"/>
          <use href="#b2-minor" class="minor-case"/><use href="#b2-minor" class="minor"/><use href="#b2-main" class="main-case"/><use href="#b2-main" class="main-road"/>
          <path d="M50-30-20 85" class="trunk-case"/><path d="M50-30-20 85" class="trunk"/>
          <g class="label"><text class="wood" x="150" y="707" textLength="188" lengthAdjust="spacingAndGlyphs">Aranya</text><text class="wood" x="144" y="779" textLength="204" lengthAdjust="spacingAndGlyphs">Udhyan</text></g>
        </svg>

        <svg x="1160" y="970" width="422" height="370" viewBox="0 0 1266 1110">
          <rect width="1270" height="1110" fill="#f2efe9"/>
          <path d="M315 480 400 500 430 550 350 620 240 580z" fill="url(#village)"/><path d="M85 200 180 210 160 260 70 250z" fill="url(#village)" opacity=".7"/>
          <path d="M0 680 90 660 145 620 180 615M660 645H710M720 650 780 628M730 650 745 680M820 215 835 228" class="path"/>
          <use href="#c2-minor" class="minor-case"/><use href="#c2-minor" class="minor"/><use href="#c2-main" class="main-case"/><use href="#c2-main" class="main-road"/>
          <path d="M985 20 1035 250Q1060 310 1120 370 1180 440 1245 560" class="yellow-case"/><path d="M985 20 1035 250Q1060 310 1120 370 1180 440 1245 560" class="yellow"/>
          <path d="M975-20 990 15 1245 185" class="orange-case"/><path d="M975-20 990 15 1245 185" class="orange"/>
          <path d="M595-20 480 210 420 310 230 550Q200 590 198 640L115 1120" class="trunk-case"/><path d="M595-20 520 130M373 370 230 550" class="bridge-case"/><path d="M595-20 480 210 420 310 230 550Q200 590 198 640L115 1120" class="trunk"/>
          <g class="label"><text class="trunk-name" transform="translate(447 323) rotate(-61)" textLength="120" lengthAdjust="spacingAndGlyphs">NH48</text><text class="trunk-name" transform="translate(170 895) rotate(-82)" textLength="122" lengthAdjust="spacingAndGlyphs">NH48</text></g>
        </svg>
      </svg>

      <div class="zoom">
        <svg viewBox="0 0 60 60"><path d="M19 31H43M31 19V43"/></svg>
        <svg viewBox="0 0 60 60"><path d="M19 31H43"/></svg>
      </div>
      <svg class="marker" viewBox="0 0 100 90">
        <defs><linearGradient id="pin" x2="0" y2="1"><stop stop-color="#3883b7"/><stop offset=".3" stop-color="#3a8acb"/><stop offset="1" stop-color="#126fc6"/></linearGradient><filter id="soft"><feGaussianBlur stdDeviation="5"/></filter></defs>
        <path d="M25 80 52 46Q66 34 70 44 70 56 25 80z" fill="#000" opacity=".2" filter="url(#soft)"/>
        <path d="M25 80C21 64 1 44 1 26a24 24 0 0 1 48 0C49 44 29 64 25 80z" fill="url(#pin)" stroke="#2e6c97" stroke-width="2"/><path d="M25 74C20 60 3.500 43 3.500 26a21.500 21.500 0 0 1 43 0C46.500 43 30 60 25 74z" fill="none" stroke="#fff" stroke-opacity=".14" stroke-width="2"/><circle cx="25" cy="26" r="9" fill="#fff" stroke="#2e6c97" stroke-width="2"/>
      </svg>
      <div class="popup"><span>IIT Gandhinagar.</span><svg viewBox="0 0 16 16"><path d="M0 0 16 16M16 0 0 16"/></svg><i></i></div>
      <div class="credit"><b></b><a>Leaflet</a><span>| © OpenStreetMap</span></div>
    </div>
  </section>
  <section class="card">
    <h1 class="title-news">Subscribe to Our Newsletter</h1>
    <p class="pitch">Get the top 3 products delivered to your inbox daily. No<br><span class="pitch-end">spam, we promise.</span></p>
    <div class="field mail">lakshya.kesarwani@iitgn.ac.in</div>
    <button class="submit">Subscribe Now</button>
    <p class="success">Successfully subscribed!</p>
  </section>
</main>
</body>
</html>
```
FILE: styles.css
```css
* { box-sizing: border-box; }
body { margin: 0; min-height: 1469px; background: #eff7ff; font-family: Lato, "Liberation Sans", sans-serif; font-variant-ligatures: none; color: #1e293b; }
.header { height: 126px; padding: 0 172px 0 176px; display: flex; justify-content: space-between; background: #fff; box-shadow: 0 2px 6px rgba(0, 0, 0, .08); }
.brand { display: flex; align-items: center; gap: 32px; }
.logo { width: 64px; height: 64px; fill: none; stroke: #f97316; stroke-width: 4; stroke-linecap: round; stroke-linejoin: round; }
.brand-name { font-size: 40px; font-weight: 900; line-height: 46px; letter-spacing: 1.05px; padding-bottom: 2px; }
.nav { display: flex; gap: 64px; padding-top: 43px; font-size: 26px; line-height: 40px; color: #475569; white-space: nowrap; }
.nav a { height: 42px; }
.nav .active { margin-top: -2px; height: 43px; color: #d2691e; border-bottom: 4px solid #d2691e; letter-spacing: .25px; }
.main { display: grid; grid-template-columns: 1459px 941px; gap: 96px; padding: 64px 0 0 176px; }
.card { height: 1204px; padding: 64px; border-radius: 24px; background: #fff; box-shadow: 0 8px 12px -2px rgba(0, 0, 0, .1), 0 4px 8px -4px rgba(0, 0, 0, .1); }
h1 { margin: 0 0 50px; padding-top: 1px; font-size: 60px; line-height: 68px; font-weight: 900; color: #0f172a; white-space: nowrap; }
.title-touch { letter-spacing: 1.4px; }
.title-news { letter-spacing: 1.8px; }
p { margin: 0; font-size: 30px; line-height: 48px; color: #475569; white-space: nowrap; }
.intro { letter-spacing: -.16px; }
.contact { display: flex; align-items: center; gap: 24px; margin-top: 32px; height: 48px; font-size: 30px; line-height: 48px; color: #2f4f4f; }
.mail { letter-spacing: -.25px; }
.place { letter-spacing: -.3px; }
.icon { width: 40px; height: 40px; fill: #64748b; }
.map { position: relative; width: 1331px; height: 700px; margin-top: 49px; border-radius: 16px; overflow: hidden; font-family: "Liberation Sans", Arial, sans-serif; }
.tiles { display: block; width: 100%; height: 100%; }
.tiles svg { overflow: hidden; }
.minor, .minor-case, .main-road, .main-case, .trunk, .trunk-case, .bridge-case, .orange, .orange-case, .yellow, .yellow-case, .path { fill: none; stroke-linecap: round; stroke-linejoin: round; }
.minor-case { stroke: #d0cfcd; stroke-width: 14; }
.minor { stroke: #fff; stroke-width: 8; }
.main-case { stroke: #bdbdbd; stroke-width: 26; }
.main-road { stroke: #fff; stroke-width: 20; }
.trunk-case { stroke: #df8069; stroke-width: 45; stroke-linecap: butt; }
.bridge-case { stroke: #555; stroke-width: 45; stroke-linecap: butt; }
.trunk { stroke: #f9b29c; stroke-width: 39; stroke-linecap: butt; }
.orange-case { stroke: #d7a860; stroke-width: 34; }
.orange { stroke: #fcd6a4; stroke-width: 27; }
.yellow-case { stroke: #d0d38b; stroke-width: 34; stroke-linecap: butt; }
.yellow { stroke: #f7fabf; stroke-width: 29; stroke-linecap: butt; }
.path { stroke: #d3b984; stroke-width: 5; stroke-dasharray: 26 18; }
.label { font-family: "Noto Sans", sans-serif; paint-order: stroke; stroke: rgba(255, 255, 255, .7); stroke-width: 9; stroke-linejoin: round; }
.city { font-size: 86px; fill: #444; }
.sector, .sector-red, .wood, .river { font-size: 57px; font-style: italic; fill: #777; }
.sector-red { fill: #8c4a52; }
.wood { fill: #5f8054; font-weight: 500; }
.river { fill: #5b9ac0; }
.park { font-size: 60px; font-weight: 700; fill: #6e1644; }
.road-name { font-size: 54px; fill: #45452f; stroke: #f7fabf; }
.trunk-name { font-size: 52px; fill: #4b2a22; stroke: #f9b29c; }
.zoom { position: absolute; left: 20px; top: 20px; width: 68px; height: 128px; border: 4px solid rgba(0, 0, 0, .2); border-radius: 8px; background: #fff; background-clip: padding-box; }
.zoom svg { display: block; width: 60px; height: 60px; fill: none; stroke: #000; stroke-width: 4; }
.zoom svg:first-child { border-bottom: 2px solid #ccc; }
.marker { position: absolute; left: 642px; top: 269px; width: 100px; height: 90px; }
.popup { position: absolute; left: 524px; top: 166px; width: 288px; height: 90px; padding: 24px 0 0 42px; border-radius: 24px; background: #fff; box-shadow: 0 6px 28px rgba(0, 0, 0, .4); font-size: 26px; line-height: 40px; color: #333; }
.popup svg { position: absolute; left: 256px; top: 18px; width: 16px; height: 16px; overflow: visible; stroke: #757575; stroke-width: 2.6; }
.popup i { position: absolute; left: 122px; top: 89px; width: 44px; height: 20px; background: #fff; clip-path: polygon(0 0, 100% 0, 50% 100%); }
.credit { position: absolute; right: 0; bottom: 0; width: 336px; height: 34px; padding-left: 10px; display: flex; align-items: center; background: rgba(255, 255, 255, .8); font-size: 24px; line-height: 34px; color: #333; white-space: pre; }
.credit b { width: 24px; height: 16px; margin-right: 7px; background: linear-gradient(#4c7be1 50%, #ffd500 50% 88%, #e0bc00 88%); }
.credit a { margin-right: 6px; color: #0078a8; }
.pitch { letter-spacing: .06px; }
.pitch-end { letter-spacing: -.2px; }
.field { height: 112px; margin-top: 49px; padding: 32px; border-radius: 16px; background: #f1f5f9; font-size: 30px; line-height: 48px; color: #1e293b; }
.submit { display: block; width: 813px; height: 96px; margin-top: 32px; border: 0; border-radius: 16px; background: #f97316; outline: 4px solid #101010; outline-offset: -2px; color: #fff; font: 900 32px/48px Lato, sans-serif; letter-spacing: .8px; }
.success { margin-top: 32px; text-align: center; letter-spacing: -.48px; color: #10b981; }
```
